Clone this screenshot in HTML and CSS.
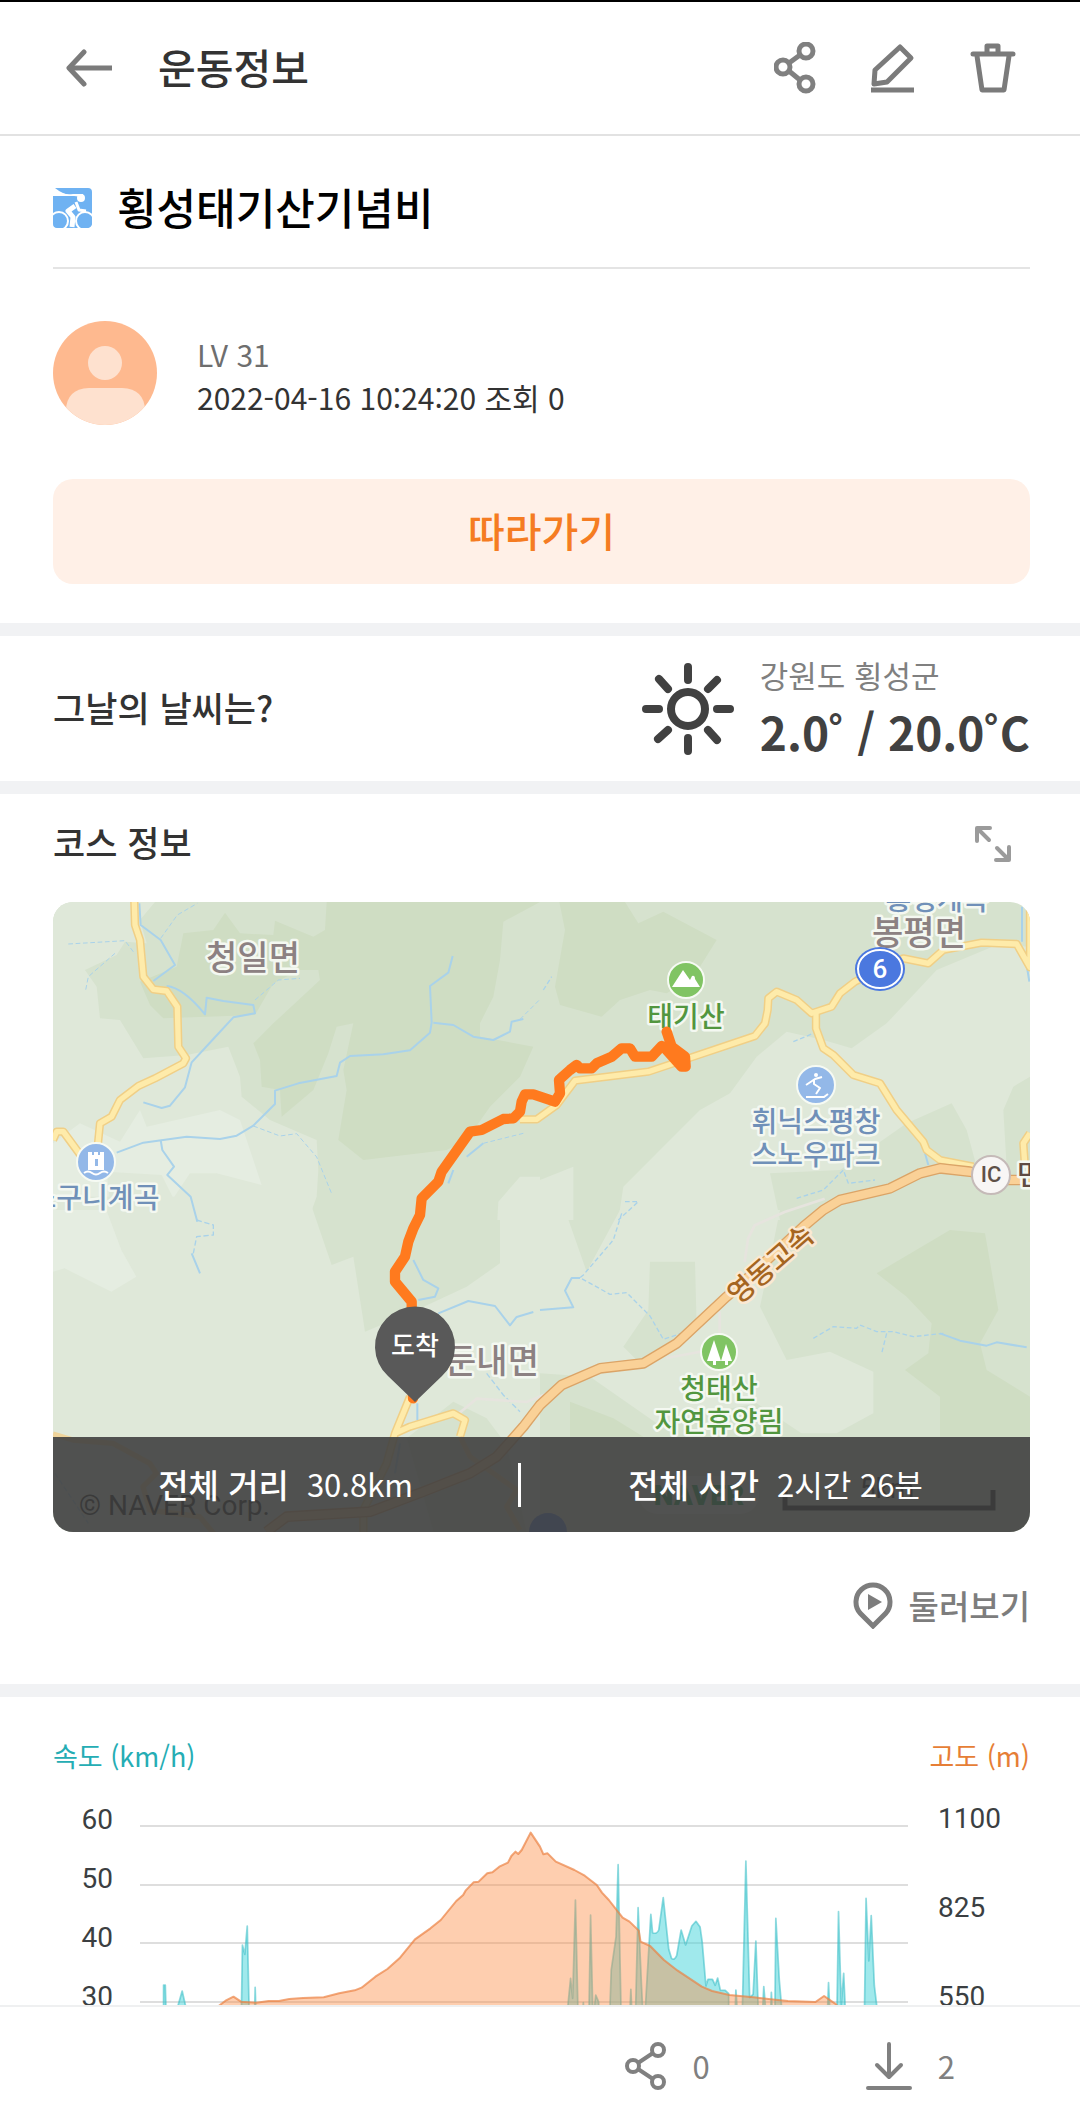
FILE: index.html
```html
<!DOCTYPE html>
<html lang="ko">
<head>
<meta charset="utf-8">
<meta name="viewport" content="width=device-width, initial-scale=1">
<title>운동정보</title>
<link rel="stylesheet" href="styles.css">
</head>
<body>
<div class="app">
  <header class="topbar">
    <button class="icon-btn" aria-label="뒤로">
      <svg width="46" height="38" viewBox="0 0 46 38" fill="none" stroke="#7b7b7b" stroke-width="5" stroke-linecap="round" stroke-linejoin="round"><path d="M18 3L3 19l15 16"/><path d="M4 19h42" stroke-linecap="butt"/></svg>
    </button>
    <h1 class="topbar-title">운동정보</h1>
    <div class="topbar-actions">
      <button class="icon-btn" aria-label="공유">
        <svg width="42" height="52" viewBox="0 0 42 52" fill="none" stroke="#808080" stroke-width="5"><circle cx="32" cy="9" r="7"/><circle cx="9" cy="25" r="7"/><circle cx="32" cy="42" r="7"/><path d="M15 21l11-8M15 29l11 9"/></svg>
      </button>
      <button class="icon-btn" aria-label="수정">
        <svg width="44" height="50" viewBox="0 0 44 50" fill="none" stroke="#7b7b7b" stroke-width="5" stroke-linejoin="round"><path d="M29 4l11 11-24 24-13 2 1-14z"/><path d="M0 47h43"/></svg>
      </button>
      <button class="icon-btn" aria-label="삭제">
        <svg width="46" height="50" viewBox="0 0 46 50" fill="none" stroke="#7b7b7b" stroke-width="5" stroke-linecap="round" stroke-linejoin="round"><path d="M3 11h40M17 10V3h11v7M7 13l5 34h22l5-34"/></svg>
      </button>
    </div>
  </header>

  <main class="content">
    <section class="summary">
      <div class="course-title">
        <svg width="39" height="40" viewBox="0 0 39 40"><path d="M2 0h33a4 4 0 0 1 4 4v32a4 4 0 0 1-4 4H4a4 4 0 0 1-4-4V8h20Q9 6 2 0z" fill="#6fb2f2"/><g fill="none" stroke="#fff"><circle cx="6" cy="33" r="9" stroke-width="2"/><circle cx="32" cy="33" r="9" stroke-width="2"/><path d="M22 18l-7 5 5 6-1 10" stroke-width="5" stroke-linejoin="round"/><path d="M23 14l3 8 7 1" stroke-width="3" stroke-linejoin="round"/></g><circle cx="28" cy="10" r="4" fill="#fff"/><path d="M4 3Q10 7 20 6h10V9l-9-1H0V6z" fill="#fff"/></svg>
        <h2 class="course-name">횡성태기산기념비</h2>
      </div>
      <div class="author">
        <svg class="avatar" width="105" height="105" viewBox="0 0 105 105"><defs><clipPath id="face"><circle cx="52" cy="52" r="52"/></clipPath></defs><g clip-path="url(#face)"><rect width="105" height="105" fill="#feb98f"/><circle cx="52" cy="42" r="17" fill="#fee1cf"/><path d="M13 110V90q0-22 23-23h33q23 1 23 23v20z" fill="#fee1cf"/></g></svg>
        <div class="author-text">
          <p class="level">LV 31</p>
          <p>2022-04-16 10:24:20 조회 0</p>
        </div>
      </div>
      <button class="follow">따라가기</button>
    </section>

    <section class="weather">
      <h3 class="section-title">그날의 날씨는?</h3>
      <svg width="92" height="92" viewBox="0 0 92 92" fill="none" stroke="#414141" stroke-width="8" stroke-linecap="round"><circle cx="46" cy="46" r="17"/><path d="M46 4v13M46 75v13M4 46h13M75 46h13M17 16l9 10M66 26l9-9M66 67l9 10M26 67l-10 9"/></svg>
      <div class="weather-text">
        <p class="place">강원도 횡성군</p>
        <p class="temp">2.0˚ / 20.0˚C</p>
      </div>
    </section>

    <section class="course">
      <div class="course-head">
        <h3 class="section-title">코스 정보</h3>
        <button class="icon-btn" aria-label="지도 확대">
          <svg width="36" height="36" viewBox="0 0 36 36" fill="none" stroke="#9b9b9b" stroke-width="4" stroke-linecap="round" stroke-linejoin="round"><path d="M2 15V2h13M3 3l11 11M34 21v13H21M33 33L22 22"/></svg>
        </button>
      </div>
      <div class="map">
        <svg class="map-art" viewBox="0 0 977 630" preserveAspectRatio="xMidYMid slice">
          <rect width="977" height="630" fill="#d6e2ce"/>
          <g transform="scale(.33333)">
            <!-- terrain -->
            <g transform="translate(-39 -36)">
              <path fill="#dfe8d9" d="M39 36H345L300 90l20 70-65-5-25 40-95 45 35 50 10 95 60 5 70 115 130-10 125-25 35 90 5 60 85 70 140 60 5 90-5 80-25 70H39zM1372 990l3-55 65-75h60v130z"/>
              <path fill="#e5ede1" d="M39 760l81-60 120 55 60-95 20 50 220-50 60 30 65 195-135-35h-80l-50 75-35-70-165-10 20 180 60 170-80 30-140-60H39z"/>
              <path fill="#cfddc3" d="M430 130l90-10 35-52 45 62 100 5 5-43 115 48 35-20 5-84h640l-110 59-10 115-20 110-40 80v40l160 30-40 90-90 90-70 100-60 30-250 30-75-60 25-150-10-60 30-140-50 10-25 80-45 110-95 80-5-80-55-10-5-80-20-50 60-60 140-130-5-30h-55l-80 40-55 95-275 10-40-40-30-70 110-45z"/>
            </g>
            <g transform="translate(1461 -36)">
              <path fill="#cfddc3" d="M58 36h197l40 64 75-35 160 85-50 80v20l-100 60-50-10-90 30-55 50-125-35-15-55 30-170z"/>
              <path fill="#dfe8d9" d="M1470 170l-100-5-180 75-150 160-105 75-85-25-110-25-90 75-80 110-90 50-120 120-110 110-15 100h485l-30-140 210-10 200-140 135-60 45 80 30 110h90l-10-170 30-70 50-30zM0 870l100-40v160H0z"/>
            </g>
            <g transform="translate(-39 924)">
              <path fill="#dfe8d9" d="M39-40H805L875 165l65-25 25 160 10 65 155-65 150-70 100-70V-20h120v1020H39z"/>
              <path fill="#e5ede1" d="M39 0h160l45 120 45 80-75 45-140-70-35 10z"/>
              <path fill="#d6e2ce" d="M1240 575l100 50 60 80 60 260H1180l-80-280z"/>
            </g>
            <g transform="translate(1461 924)">
              <path fill="#dfe8d9" d="M0 0h75l65 185L240 0h480l-30 150-30 140 80 160 130-25 130 60v125l-110 60H0z"/>
              <path fill="#d6e2ce" d="M330 155h135l5 195-170 110-50-50 75-110zM0 490l150 10 200 140 300-60 150 100-50 280H0z"/>
              <path fill="#cfddc3" d="M1010 190L1230 60l105 10 40 230-55 100 20 80 130 80v120h-270V560l-105-80 70-50 10-90-75-80zM90 575l130 50 90 55H90z"/>
            </g>
            <!-- streams -->
            <g fill="none" stroke="#a9d2ea" stroke-width="6" stroke-linejoin="round">
              <g transform="translate(-39 -36)">
                <path d="M298 40l4 65 60 45 43 75-65 48M380 288q50 5 115 85l5-50 50 10 90 12 5 25-65 12-60 65-65 70-20 75-45 55-25 7-55-17M230 788l80-30 130-18 100 7 50-10 50-30 65-65v-40l70-22 115-22 10-40 30-20 100-5 80-12 60-53 5-30-5-110 55-40 13-50M1180 398l60 7 60 35 60 10 50-25 5-30 35-8"/>
                <path d="M362 750l5 30 35 50-20 25 70 65 20 75M1280 800l50-40M1240 840l-15 40"/>
                <path stroke-width="3" stroke-dasharray="14 8" d="M362 145l50-70 60-35M85 162l170-10 30 40M225 190l-80 70-8 40M645 330l70-60 65-5M640 708l80 30 50-7 60 70 45 110M1440 388l60-60M1330 760l120-30"/>
              </g>
              <g transform="translate(1461 -36)">
                <path d="M1446 50v105M1460 225l8 50M1155 790l10 35"/>
                <path stroke-width="4" stroke-dasharray="14 8" d="M10 300l25-40M760 455l60-25M770 925l80-25 60-60 15 40 80-10M255 935h40l-60 55"/>
              </g>
              <g transform="translate(-39 924)">
                <path d="M1195 310l90-37 80 15 45 58 20-25 50-15M1132 580v50M1080 700l-15 90M455 130l25 60M1120 150l30 60 45 25-10 25-50 10"/>
                <path stroke-width="4" stroke-dasharray="16 8" d="M470 30l50 15v30l-50 5-10 50M1340 490l50 65 50 50M45 790l100 150"/>
              </g>
              <g transform="translate(1461 924)">
                <path d="M0 300l100-8-25-50 20-38h25"/>
                <path stroke-width="4" stroke-dasharray="14 8" d="M245 10l-25 80-90 105-10 8 90 50 50-5 70 70 40 70 60-20M820 385l60-35 70 5 10-10 50 20 50 0 60 15 90-10M1040 370l-15 60"/>
                <path d="M1200 370l60 22 80 15 30-10 90 15"/>
              </g>
            </g>
            <path d="M1211 1540l60-50 150 10 110-45M1840 1368l110-20 50-50v-70M2075 1080l10-70 20-40 90-40 120-40" fill="none" stroke="#e6e4de" stroke-width="8"/>
            <!-- local roads, casing then fill -->
            <g fill="none" stroke-linejoin="round" stroke="#f0cf86" stroke-width="25">
              <g id="roads">
                <path d="M244 0l2 69 15 45 10 110 30 38 40 5 32 47 3 120 23 35-8 15-85 45-50 23-55 42-25 50-35 20-7 70M0 714l11-25h20l55 75"/>
                <path d="M1401 652h50l60-43 55-73 220-27 135-45 185-62 30-38 8-40 2-35 25-20 60 25 45 40 60-20 25-40 45-35 145-70 75 15 45-40 115-22 105 4 40 70V0"/>
                <path d="M2289 334v45l22 60 30 20 60 60 80 25 50 80 80 95 10 25 40 30 100 20M2931 694l-20 30 5 70"/>
                <path d="M1071 1484l-45 110-25 90-70 140v66M1026 1594l45-20 130-40 35 20-15 50"/>
              </g>
            </g>
            <g fill="none" stroke-linejoin="round" stroke="#feebaa" stroke-width="16">
              <use href="#roads"/>
              <path d="M0 1596l60 18 120 10 110 60 20 30-40 40 20 70 150 20 50 60M1221 1604l30 60 140 100-30 50 40 70" stroke="#efd49b"/>
            </g>
            <!-- expressway -->
            <g fill="none" stroke-linejoin="round" transform="translate(1461 924)">
              <path stroke="#dba467" stroke-width="32" d="M1470-90h-70l-110-25-90-10-60 15-90 45-150 35-50 30-60 50-190 175-40 35-150 140-100 60-130 15-115 50-65 60-50 65-80 90-80 50-140 55-160 60-250 15-60 45"/>
              <path stroke="#fad197" stroke-width="24" d="M1470-90h-70l-110-25-90-10-60 15-90 45-150 35-50 30-60 50-190 175-40 35-150 140-100 60-130 15-115 50-65 60-50 65-80 90-80 50-140 55-160 60-250 15-60 45"/>
            </g>
          </g>

          <!-- place names -->
          <g class="town" text-anchor="middle">
            <text x="200" y="68">청일면</text>
            <text x="866" y="43">봉평면</text>
            <text x="439" y="471">둔내면</text>
          </g>
          <g class="poi blue" text-anchor="middle">
            <text x="884" y="8">흥정계곡</text>
            <text x="763" y="230">휘닉스평창</text>
            <text x="763" y="263">스노우파크</text>
            <text x="42" y="306">소구니계곡</text>
          </g>
          <g class="poi green" text-anchor="middle">
            <text x="633" y="125">태기산</text>
            <text x="666" y="497">청태산</text>
            <text x="666" y="530">자연휴양림</text>
          </g>
          <text class="highway" text-anchor="middle" transform="translate(724 370) rotate(-41)">영동고속</text>
          <text class="poi brown" x="964" y="283">면온</text>

          <!-- place symbols -->
          <g stroke="#f6faf3" stroke-width="2">
            <circle cx="633" cy="78" r="18" fill="#80c463"/>
            <circle cx="666" cy="450" r="18" fill="#80c463"/>
            <circle cx="763" cy="183" r="19" fill="#93b8e8"/>
            <circle cx="43" cy="260" r="19" fill="#93b8e8"/>
          </g>
          <g fill="#fff">
            <path d="M619 85l11-17 7 10 2-4q3-1 3 3l5 8z"/>
            <path d="M661 438l-7 21h6v4h3v-4h5zM673 442l-5 17h4v4h3v-4h4z"/>
            <circle cx="763" cy="173" r="2"/>
            <path d="M35 250h4v3h2v-3h4v3h2v-3h4v18H35zM42 257v7h3v-7z" fill-rule="evenodd"/>
          </g>
          <g fill="none" stroke="#fff" stroke-width="2" stroke-linejoin="round">
            <path d="M769 175l-7 2-9 6M761 177v5l6 4-4 6M753 195h18l4-3M31 271q4-3 8 0t8 0 8 0"/>
          </g>
          <ellipse cx="827" cy="67" rx="25" ry="22" fill="#4b78df"/>
          <ellipse cx="827" cy="67" rx="22" ry="19" fill="none" stroke="#fff" stroke-width="2"/>
          <text class="route-no" x="827" y="76" text-anchor="middle">6</text>
          <circle cx="938" cy="273" r="19" fill="#f8f6f5" stroke="#c5bab8" stroke-width="2"/>
          <text class="ic" x="938" y="280" text-anchor="middle">IC</text>

          <!-- recorded track and finish pin -->
          <path transform="scale(.33333) translate(1461 -36)" d="M380 425l15 45 40 30 2 30h-12l-50-55-10-7-30 32h-50l-15-25h-25l-30 25-45 20-15 15-35 0-10-10-20 15-28 25-5 5 3 40-15 25-65-22h-25l-10 22-5 30-20 20-30 2-65 33-35 5-85 120-10 30-50 50-5 50-20 40-15 40-10 45-30 45v30l50 60 4 290" fill="none" stroke="#ff7a1e" stroke-width="31" stroke-linecap="round" stroke-linejoin="round"/>
          <path d="M362 500l-27-26a40 40 0 1 1 54 0z" fill="#595959"/>
          <text class="pin" x="362" y="453" text-anchor="middle">도착</text>

          <!-- map provider marks -->
          <text class="copyright" x="26" y="613">© NAVER Corp.</text>
          <rect x="586" y="574" width="120" height="38" rx="19" fill="#fff" opacity=".5"/>
          <text class="provider" x="646" y="603" text-anchor="middle">NAVER</text>
          <path d="M732 588v18h208v-18" fill="none" stroke="#111" stroke-width="5"/>
          <circle cx="495" cy="630" r="19" fill="#4b78df"/>
          <text class="copyright" x="834" y="596" text-anchor="middle">5km</text>
        </svg>
        <dl class="totals">
          <div class="total"><dt>전체 거리</dt><dd>30.8km</dd></div>
          <div class="total"><dt>전체 시간</dt><dd>2시간 26분</dd></div>
        </dl>
      </div>
      <div class="tour-row">
        <button class="tour">
          <svg width="40" height="47" viewBox="0 0 40 47"><path d="M20 44L7 31a17 17 0 1 1 26 0z" fill="none" stroke="#7d7d7d" stroke-width="5"/><path d="M15 12l14 8-14 8z" fill="#7d7d7d"/></svg>
          둘러보기
        </button>
      </div>
    </section>

    <section class="graph">
      <div class="graph-head">
        <h3 class="speed-title">속도 (km/h)</h3>
        <h3 class="alt-title">고도 (m)</h3>
      </div>
      <div class="graph-body">
        <ul class="axis speed-axis"><li>60</li><li>50</li><li>40</li><li>30</li></ul>
        <svg class="plot" viewBox="0 0 768 240" preserveAspectRatio="none">
          <path d="M0 10h768M0 69h768M0 127h768M0 186h768" stroke="#dedede" stroke-width="2"/>
          <g transform="translate(-140 -96) scale(.34436 .33333)" stroke-linejoin="round">
            <path fill="#42d4d9" fill-opacity=".5" stroke="#35bcc4" stroke-opacity=".55" stroke-width="5" d="M475 940V795h5l4 145zM505 900l24-87 20 90zM700 940l4-265 7 28 7-85 7 322zM738 940l3-138 4 138zM1645 900l12-125 6 60 8-295 8 360zM1690 900l4-52 3 52zM1710 900l5-315 7 315 8-75 8 20 4 55zM1770 900l5-150 14-100 6-216 9 466zM1828 900l4-92 4 92zM1845 900l8-337 10 237 5 100zM1872 900l18-317 5 55q12 6 18-8l13-97 16 155 8 27q8 8 15-8l13-77 13 45 18-57 12-14 12 17 6 44 11 133 6-20 13 0 8 18 7-22 8 37 14 0 10 10v110zM2134 900l3-90 6 90zM2155 900l11-477 11 410 10-10 8-160 8 240zM2213 900l5-100 8 100zM2237 900l3-83 4 83zM2250 900l3-305 10 185 10 120zM2402 900l4-112 5 112zM2430 900l5-325 8 280 7-95 6 140zM2510 900l5-365 8 188 7-136 9 210 12 103z"/>
            <path fill="#fd8b40" fill-opacity=".42" d="M620 870l35-28 23-12 22 15 45 3 35-5h30l30-6 40-3 60-2 45-12 45-9 20-8 40-33 35-23 35-32 45-57 45-33 30-25 45-57 20-18 7-13 23-25 15-2 25-25 15-3 20-17 25-12 10-20 12-13 8 7 10-12 26-52 27 42 10 23 12-3 24 25 54 25 30 17 35 28 15 23 20 22 40 53 20 12 27 27 5 33 28 13 40 42 40 32 70 48 30 13 50 12 70 7 50 6 50 5 80 3 25-18 35 25 30 50v300H620z"/>
            <path fill="none" stroke="#eb8243" stroke-opacity=".7" stroke-width="6" d="M620 870l35-28 23-12 22 15 45 3 35-5h30l30-6 40-3 60-2 45-12 45-9 20-8 40-33 35-23 35-32 45-57 45-33 30-25 45-57 20-18 7-13 23-25 15-2 25-25 15-3 20-17 25-12 10-20 12-13 8 7 10-12 26-52 27 42 10 23 12-3 24 25 54 25 30 17 35 28 15 23 20 22 40 53 20 12 27 27 5 33 28 13 40 42 40 32 70 48 30 13 50 12 70 7 50 6 50 5 80 3 25-18 35 25 30 50"/>
          </g>
        </svg>
        <ul class="axis alt-axis"><li>1100</li><li>825</li><li>550</li></ul>
      </div>
    </section>
  </main>

  <footer class="bottombar">
    <button class="count">
      <svg width="42" height="48" viewBox="0 0 42 48" fill="none" stroke="#808080" stroke-width="4"><circle cx="33" cy="8" r="6"/><circle cx="8" cy="24" r="6"/><circle cx="33" cy="40" r="6"/><path d="M13 21l15-10M13 27l15 10"/></svg>
      0
    </button>
    <button class="count">
      <svg width="46" height="48" viewBox="0 0 46 48" fill="none" stroke="#808080" stroke-width="4" stroke-linecap="round" stroke-linejoin="round"><path d="M23 2v32M11 23l12 12 12-12M2 46h42"/></svg>
      2
    </button>
  </footer>
</div>
</body>
</html>
```

FILE: styles.css
```css
* { box-sizing: border-box; margin: 0; padding: 0; }

body {
  background: #fff;
  color: #333;
  font-family: "Noto Sans CJK KR", sans-serif;
}

button {
  border: 0;
  background: none;
  color: inherit;
  font: inherit;
}

svg { display: block; flex: none; }
ul { list-style: none; }

.app {
  display: flex;
  flex-direction: column;
  height: 100vh;
  border-top: 2px solid #000;
}

/* top bar */
.topbar {
  display: flex;
  align-items: center;
  height: 134px;
  padding: 0 64px 0 66px;
  border-bottom: 2px solid #e2e2e2;
  flex: none;
}
.topbar-title {
  margin-left: 46px;
  padding-bottom: 4px;
  font-size: 41px;
  font-weight: 500;
  line-height: 48px;
}
.topbar-actions {
  display: flex;
  align-items: center;
  gap: 55px;
  margin-left: auto;
}

.content {
  flex: 1;
  min-height: 0;
  overflow-y: auto;
  scrollbar-width: none;
}
.content > section { border-bottom: 13px solid #f1f2f4; }

/* title, author, follow */
.summary { padding: 0 50px 39px 53px; }
.course-title {
  display: flex;
  align-items: center;
  gap: 25px;
  height: 133px;
  padding-top: 12px;
  border-bottom: 2px solid #e4e4e4;
}
.course-name {
  padding-bottom: 4px;
  color: #000;
  font-size: 43px;
  font-weight: 500;
  line-height: 48px;
}
.author {
  display: flex;
  align-items: center;
  gap: 39px;
  padding: 52px 0 53px;
}
.author-text { font-size: 30px; line-height: 43px; padding-top: 4px; }
.level { color: #6e6e6e; }
.follow {
  display: block;
  width: 100%;
  height: 105px;
  padding-bottom: 4px;
  border-radius: 20px;
  background: #fff0e7;
  color: #f57c22;
  font-size: 40px;
  font-weight: 500;
}

/* weather */
.weather {
  display: flex;
  align-items: center;
  height: 158px;
  padding: 0 50px 0 53px;
}
.section-title {
  margin-right: auto;
  padding-bottom: 4px;
  font-size: 35px;
  font-weight: 500;
  line-height: 48px;
}
.weather-text { margin-left: 26px; padding-bottom: 4px; }
.place { color: #808080; font-size: 31px; line-height: 48px; }
.temp { color: #414141; font-size: 46px; font-weight: 700; line-height: 64px; }

/* course map */
.course { padding: 0 50px 0 53px; }
.course-head {
  display: flex;
  align-items: center;
  height: 108px;
  padding: 0 19px 8px 0;
}
.map {
  position: relative;
  overflow: hidden;
  border-radius: 20px;
}
.map-art { width: 100%; height: auto; }
.map text {
  font-weight: 500;
  paint-order: stroke;
  stroke: #f4f8f1;
  stroke-width: 5px;
  stroke-linejoin: round;
}
.map .town { font-size: 34px; fill: #8c8182; }
.map .poi { font-size: 28px; }
.map .blue { fill: #7090b8; }
.map .green { fill: #52963f; }
.map .brown { fill: #5f4b42; }
.map .highway { font-size: 28px; fill: #a5651f; stroke: #fbe9d2; }
.map .route-no { font-family: Roboto, sans-serif; font-size: 26px; fill: #fff; stroke: none; }
.map .ic { font-family: Roboto, sans-serif; font-size: 22px; fill: #5f5048; stroke: none; }
.map .pin { font-size: 26px; fill: #fff; stroke: none; }
.map .copyright { font-family: Roboto, sans-serif; font-size: 28px; font-weight: 400; fill: #000; stroke: none; }
.map .provider { font-family: Roboto, sans-serif; font-size: 28px; font-weight: 900; fill: #00a63c; stroke: none; }

.totals {
  position: absolute;
  right: 0;
  bottom: 0;
  left: 0;
  display: grid;
  grid-template-columns: 10fr 11fr;
  align-items: center;
  height: 95px;
  background: rgba(64, 64, 64, .9);
  color: #fff;
  line-height: 42px;
}
.total {
  display: flex;
  justify-content: center;
  align-items: center;
  gap: 18px;
  padding-bottom: 2px;
}
.total + .total { border-left: 3px solid #fff; }
.total dt { font-size: 33px; font-weight: 500; }
.total dd { font-size: 31px; }

.tour-row {
  display: flex;
  justify-content: flex-end;
  align-items: center;
  height: 152px;
  padding-bottom: 6px;
}
.tour {
  display: flex;
  align-items: center;
  gap: 16px;
  color: #7d7d7d;
  font-size: 33px;
  font-weight: 500;
  line-height: 48px;
}

/* speed and altitude */
.graph { padding: 40px 50px 0 53px; }
.graph-head {
  display: flex;
  justify-content: space-between;
  line-height: 38px;
}
.graph-head h3 { font-size: 27px; font-weight: 400; }
.speed-title { color: #25adb4; }
.alt-title { color: #e67e36; }
.graph-body {
  display: flex;
  padding-top: 41px;
}
.plot { flex: 1; height: 240px; min-width: 0; }
.axis {
  color: #3b3f42;
  font-family: Roboto, sans-serif;
  font-size: 28px;
}
.speed-axis { width: 87px; padding-right: 27px; text-align: right; line-height: 59px; margin-top: -26px; }
.alt-axis { width: 122px; padding-left: 30px; line-height: 89px; margin-top: -42px; }

/* bottom bar */
.bottombar {
  display: flex;
  justify-content: flex-end;
  align-items: center;
  gap: 156px;
  height: 120px;
  padding-right: 125px;
  border-top: 2px solid #eff0f1;
  flex: none;
}
.count {
  display: flex;
  align-items: center;
  gap: 26px;
  color: #808080;
  font-size: 31px;
  line-height: 40px;
}
```
